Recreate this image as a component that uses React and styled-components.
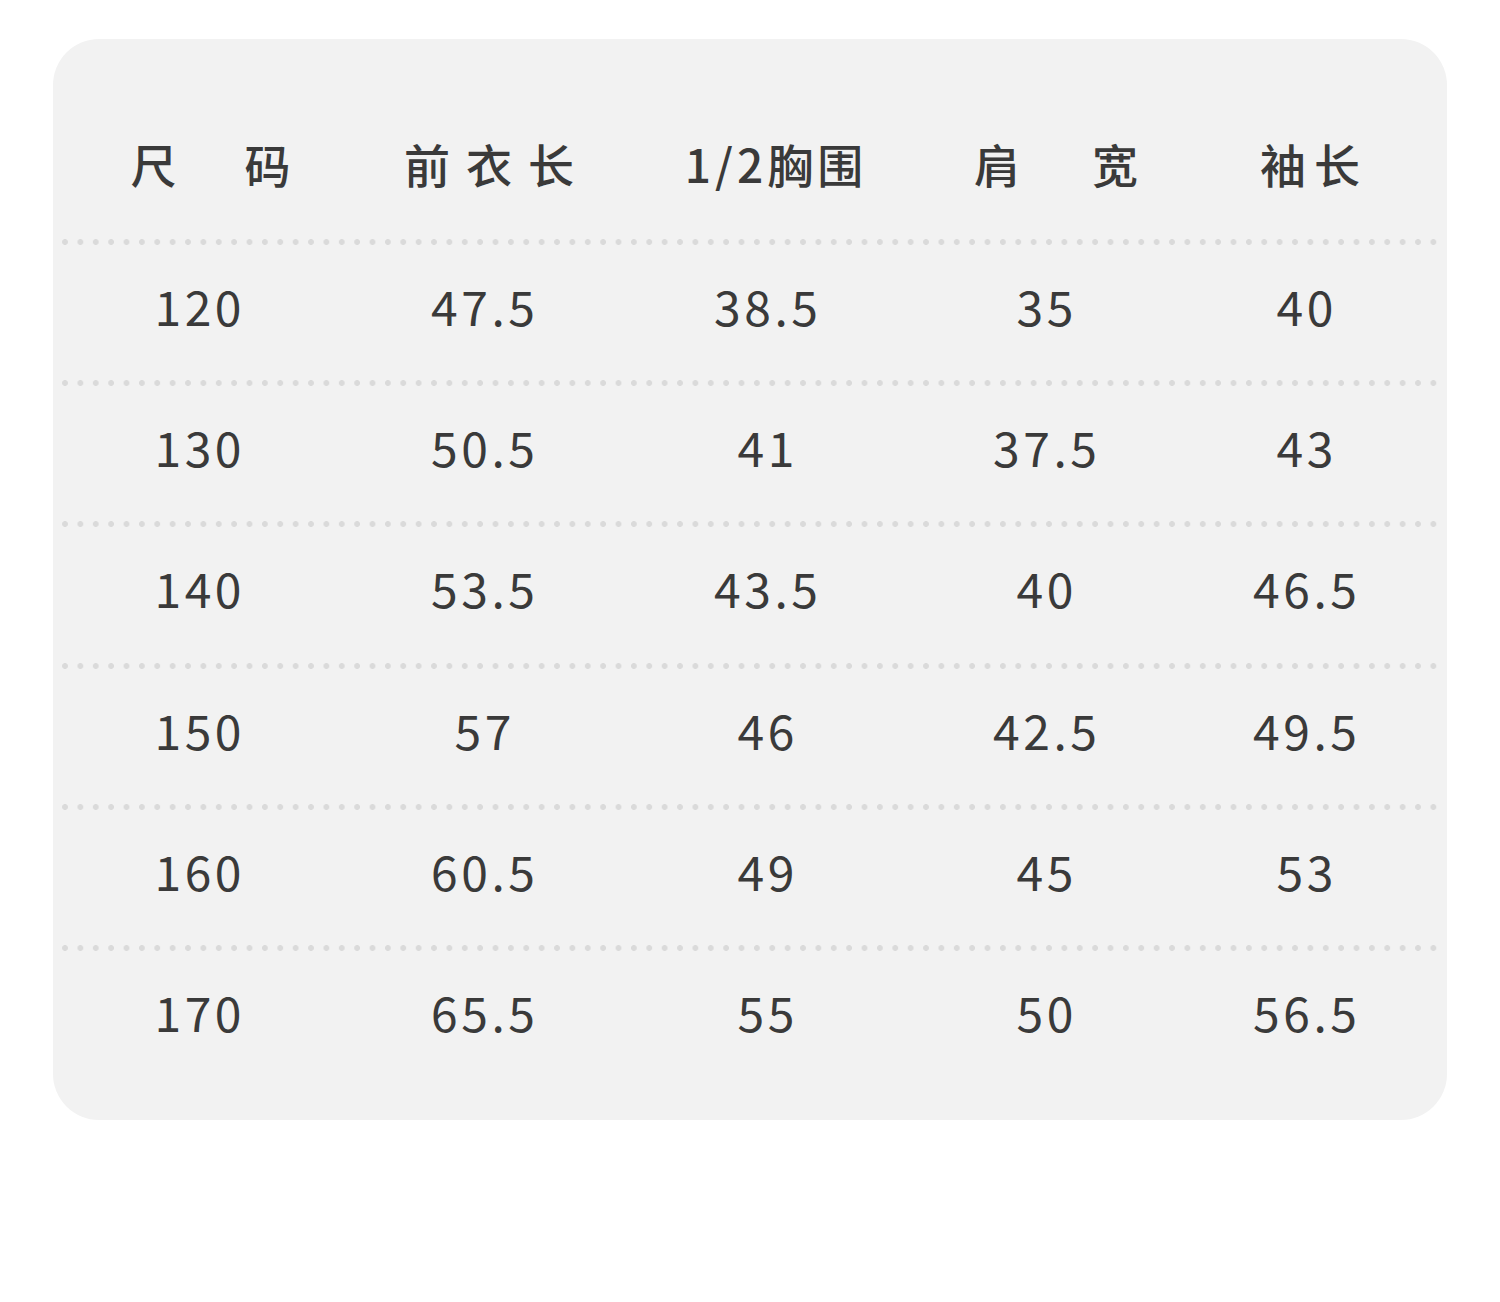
import React from "react";
import styled, { createGlobalStyle } from "styled-components";

const GlobalStyle = createGlobalStyle`
  html, body { margin: 0; padding: 0; background: #ffffff; }
  body { font-family: "Noto Sans CJK SC", "Noto Sans", sans-serif; color: #3a3a3a; }
`;

const Page = styled.div`
  width: 1500px;
  height: 1302px;
  padding: 39px 0 0 53px;
  box-sizing: border-box;
`;

const Card = styled.div`
  width: 1394px;
  height: 1081px;
  box-sizing: border-box;
  background: #f2f2f2;
  border-radius: 46px;
  padding: 0 9px;
  display: flex;
  flex-direction: column;
`;

const COLS = "272px 298px 268px 290px 230px";

const HeaderRow = styled.div`
  display: grid;
  grid-template-columns: ${COLS};
  height: 200px;
  flex: none;
  box-sizing: border-box;
  padding-top: 47px;
  align-items: center;
`;

const HeadCell = styled.div`
  display: flex;
  justify-content: center;
  padding-left: ${(p) => p.$shift}px;
`;

const HeadText = styled.span`
  font-size: 46px;
  line-height: 46px;
  font-weight: 500;
  color: #3a3a3a;
  letter-spacing: ${(p) => p.$ls}px;
  margin-right: -${(p) => p.$ls}px;
  white-space: nowrap;
`;

const Dots = styled.div`
  width: 1375px;
  height: 6px;
  flex: none;
  background-image: radial-gradient(circle, #dadada 2.6px, rgba(218, 218, 218, 0) 3.2px);
  background-size: 15.382px 6px;
  background-position: -4.69px 0;
  background-repeat: repeat-x;
`;

const DataRow = styled.div`
  display: grid;
  grid-template-columns: ${COLS};
  height: 135.2px;
  flex: none;
  box-sizing: border-box;
  padding-bottom: 15px;
  align-items: center;
`;

const Cell = styled.div`
  display: flex;
  justify-content: center;
`;

const Num = styled.span`
  font-size: 48px;
  line-height: 48px;
  font-weight: 400;
  color: #3a3a3a;
  letter-spacing: 3.5px;
  margin-right: -3.5px;
`;

const headers = [
  { t: "尺码", ls: 68, shift: 25 },
  { t: "前衣长", ls: 16, shift: 12 },
  { t: "1/2胸围", ls: 4, shift: 16 },
  { t: "肩宽", ls: 72, shift: 22 },
  { t: "袖长", ls: 8, shift: 10 },
];

const rows = [
  ["120", "47.5", "38.5", "35", "40"],
  ["130", "50.5", "41", "37.5", "43"],
  ["140", "53.5", "43.5", "40", "46.5"],
  ["150", "57", "46", "42.5", "49.5"],
  ["160", "60.5", "49", "45", "53"],
  ["170", "65.5", "55", "50", "56.5"],
];

export default function App() {
  return (
    <>
      <GlobalStyle />
      <Page>
        <Card>
          <HeaderRow>
            {headers.map((h) => (
              <HeadCell key={h.t} $shift={h.shift}>
                <HeadText $ls={h.ls}>{h.t}</HeadText>
              </HeadCell>
            ))}
          </HeaderRow>
          {rows.map((r, i) => (
            <React.Fragment key={i}>
              <Dots />
              <DataRow>
                {r.map((v, j) => (
                  <Cell key={j}>
                    <Num>{v}</Num>
                  </Cell>
                ))}
              </DataRow>
            </React.Fragment>
          ))}
        </Card>
      </Page>
    </>
  );
}
